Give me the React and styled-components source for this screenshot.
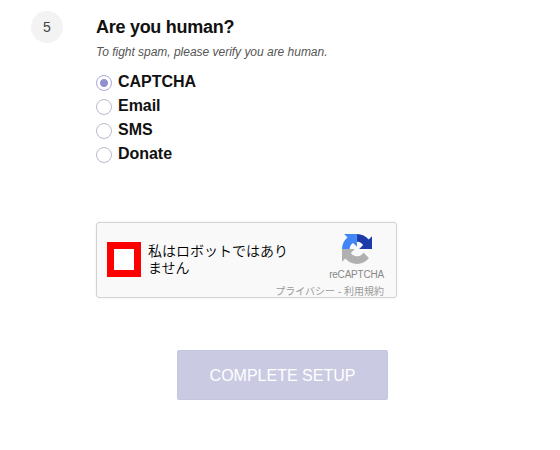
import React, { useState } from "react";
import styled, { createGlobalStyle } from "styled-components";

const GlobalStyle = createGlobalStyle`
  * { box-sizing: border-box; }
  body {
    margin: 0;
    background: #fff;
    color: #111;
    font-family: "Liberation Sans", "Noto Sans CJK JP", sans-serif;
  }
`;

const Step = styled.main`
  display: grid;
  grid-template-columns: 32px 1fr;
  column-gap: 33px;
  padding: 11px 31px 0;
`;

const StepNumber = styled.div`
  display: flex;
  align-items: center;
  justify-content: center;
  width: 32px;
  height: 32px;
  border-radius: 50%;
  background: #f3f3f3;
  color: #444;
  font-size: 14px;
`;

const Title = styled.h1`
  margin: 5px 0 0;
  font-size: 18px;
  line-height: 22px;
  letter-spacing: -0.28px;
`;

const Hint = styled.p`
  margin: 6px 0 0;
  font-size: 12px;
  line-height: 16px;
  letter-spacing: -0.02px;
  font-style: italic;
  color: #555;
`;

const Options = styled.div`
  display: flex;
  flex-direction: column;
  margin-top: 10px;
`;

const Option = styled.label`
  display: flex;
  align-items: center;
  gap: 6px;
  height: 24px;
  font-size: 16px;
  font-weight: bold;
  letter-spacing: -0.04px;
`;

const Radio = styled.input`
  appearance: none;
  width: 16px;
  height: 16px;
  margin: 1px 0 0;
  border: 1px solid #b9bcca;
  border-radius: 50%;
  background: #fff;
  &:checked {
    border-color: #a9aad8;
    background: radial-gradient(circle, #9192cb 3.6px, #fff 4.4px);
  }
`;

const Captcha = styled.section`
  display: flex;
  width: 301px;
  height: 76px;
  margin-top: 56px;
  border: 1px solid #d3d3d3;
  border-radius: 3px;
  background: #f9f9f9;
  box-shadow: 0 0 3px rgba(0, 0, 0, 0.06);
`;

const CheckBox = styled.button`
  flex: none;
  width: 34px;
  height: 35px;
  margin: 19px 0 0 10px;
  padding: 0;
  border: 7px solid #f00;
  background: #fff;
`;

const CaptchaLabel = styled.div`
  flex: none;
  width: 142px;
  margin: 19px 0 0 7px;
  font: 350 14px/17px "Noto Sans CJK JP", sans-serif;
  color: #000;
`;

const Brand = styled.div`
  display: flex;
  flex: 1;
  min-width: 0;
  flex-direction: column;
  align-items: flex-end;
  padding: 11px 12px 0 0;
  color: #888;
`;

const Logo = styled.svg`
  flex: none;
  width: 30px;
  height: 30px;
  margin-right: 12px;
`;

const BrandName = styled.div`
  margin-top: 4px;
  font-size: 10px;
  line-height: 13px;
  letter-spacing: -0.2px;
`;

const Legal = styled.div`
  margin-top: 4px;
  font: 10px/14px "Liberation Sans", "Noto Sans CJK JP", sans-serif;
  white-space: nowrap;
  color: #999;
`;

const Submit = styled.button`
  display: block;
  width: 211px;
  height: 50px;
  margin: 52px 0 0 81px;
  padding: 2px 0 0;
  border: 1px solid #c4c5df;
  border-radius: 2px;
  background: #cacbe3;
  color: #fff;
  font: 16px "Liberation Sans", sans-serif;
`;

const methods = ["CAPTCHA", "Email", "SMS", "Donate"];

function RecaptchaLogo() {
  return (
    <Logo viewBox="0 0 64 64" aria-hidden="true">
      <path fill="#1c3aa9" d="M64 31.955l-.033-1.37V4.687l-7.16 7.16C50.948 4.674 42.033.093 32.05.093v16.261c.485 0 .86.057 1.135.163 4.976.393 9.288 3.14 11.828 7.124l-8.307 8.307L64 31.953" />
      <path fill="#4285f4" d="M31.862.094l-1.37.033H4.594l7.16 7.16C4.58 13.147 0 22.06 0 32.046h16.26c0-.485.057-.86.163-1.135.393-4.976 3.14-9.288 7.124-11.828l8.307 8.307L31.86.095" />
      <path fill="#b0b0b0" d="M.001 32.045l.033 1.37v25.898l7.16-7.16c5.86 7.173 14.774 11.754 24.76 11.754 10.4 0 19.622-4.96 25.458-12.64l-11.736-11.86a15.55 15.55 0 0 1-4.754 5.334c-2.05 1.6-4.952 2.906-8.968 2.906-.485 0-.86-.057-1.135-.163-4.976-.393-9.288-3.14-11.828-7.124l8.307-8.307c-10.522.04-22.4.066-27.295-.005" />
    </Logo>
  );
}

export default function App() {
  const [method, setMethod] = useState("CAPTCHA");
  return (
    <>
      <GlobalStyle />
      <Step>
        <StepNumber>5</StepNumber>
        <div>
          <Title>Are you human?</Title>
          <Hint>To fight spam, please verify you are human.</Hint>
          <Options>
            {methods.map((name) => (
              <Option key={name}>
                <Radio
                  type="radio"
                  name="method"
                  checked={method === name}
                  onChange={() => setMethod(name)}
                />
                {name}
              </Option>
            ))}
          </Options>
          <Captcha>
            <CheckBox aria-label="reCAPTCHA" />
            <CaptchaLabel>私はロボットではありません</CaptchaLabel>
            <Brand>
              <RecaptchaLogo />
              <BrandName>reCAPTCHA</BrandName>
              <Legal>プライバシー - 利用規約</Legal>
            </Brand>
          </Captcha>
          <Submit>COMPLETE SETUP</Submit>
        </div>
      </Step>
    </>
  );
}
